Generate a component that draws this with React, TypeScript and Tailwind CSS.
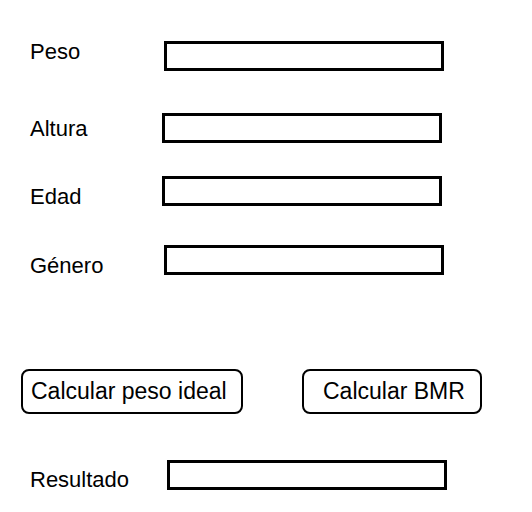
import React from 'react';

const font = { fontFamily: '"Liberation Sans", Arial, sans-serif' };

function Field({ label, className, labelOffset, inputOffset, labelWidth }: { label: string; className: string; labelOffset: string; inputOffset: string; labelWidth: string }) {
  return (
    <div className={`flex items-start pl-[30px] ${className}`}>
      <span className={`${labelWidth} ${labelOffset} text-[22px] leading-[26px] text-black`}>{label}</span>
      <div className={`${inputOffset} h-[30px] w-[280px] border-[3px] border-black bg-white`} />
    </div>
  );
}

export default function App() {
  return (
    <div className="h-[512px] w-[532px] bg-white pt-[39px]" style={font}>
      <Field label="Peso" className="" labelWidth="w-[134px]" labelOffset="mt-0" inputOffset="mt-[2px]" />
      <Field label="Altura" className="mt-[42px]" labelWidth="w-[132px]" labelOffset="mt-[3px]" inputOffset="mt-0" />
      <Field label="Edad" className="mt-[33px]" labelWidth="w-[132px]" labelOffset="mt-[8px]" inputOffset="mt-0" />
      <Field label="Género" className="mt-[35px]" labelWidth="w-[134px]" labelOffset="mt-[8px]" inputOffset="mt-0" />

      <div className="mt-[90px] flex items-start gap-[59px] pl-[21px]">
        <button className="flex h-[45px] w-[222px] items-center rounded-[8px] border-2 border-black bg-white pl-[8px] text-[23px] text-black">
          Calcular peso ideal
        </button>
        <button className="flex h-[45px] w-[180px] items-center rounded-[8px] border-2 border-black bg-white pl-[19px] text-[23px] text-black">
          Calcular BMR
        </button>
      </div>

      <Field label="Resultado" className="mt-[46px]" labelWidth="w-[137px]" labelOffset="mt-[7px]" inputOffset="mt-0" />
    </div>
  );
}
